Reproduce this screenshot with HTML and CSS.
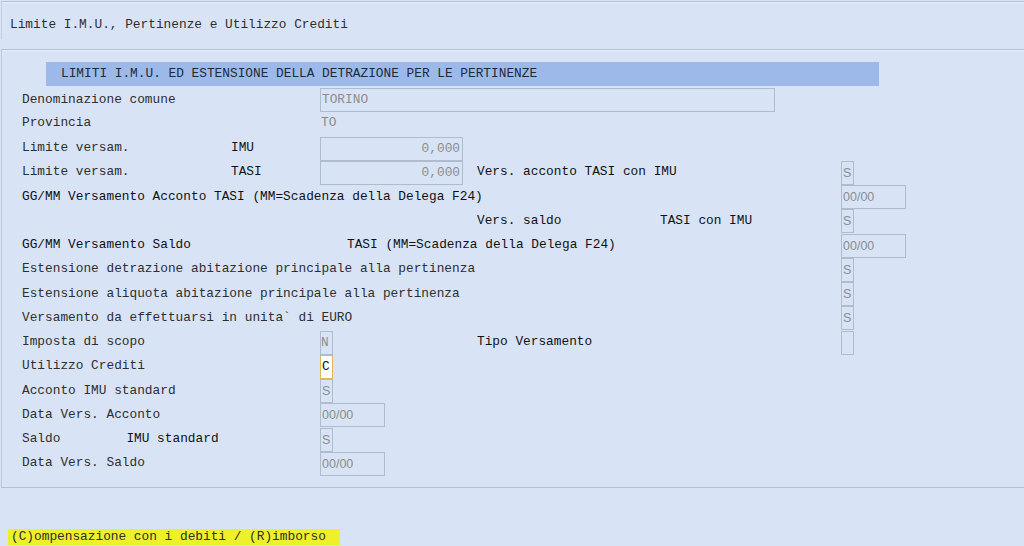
FILE: index.html
```html
<!DOCTYPE html>
<html>
<head>
<meta charset="utf-8">
<link rel="stylesheet" href="styles.css">
</head>
<body>
<div class="titlebox">Limite I.M.U., Pertinenze e Utilizzo Crediti</div>
<div class="panel">
  <div class="header">LIMITI I.M.U. ED ESTENSIONE DELLA DETRAZIONE PER LE PERTINENZE</div>
  <div class="grid">
    <div class="row">
      <span class="c1 span2">Denominazione comune</span>
      <span class="c3 to-end"><span class="box mono wide">TORINO</span></span>
    </div>
    <div class="row">
      <span class="c1 span2">Provincia</span>
      <span class="c3 plain">TO</span>
    </div>
    <div class="row">
      <span class="c1">Limite versam.</span>
      <span class="c2 dark">IMU</span>
      <span class="c3"><span class="box mono num">0,000</span></span>
    </div>
    <div class="row">
      <span class="c1">Limite versam.</span>
      <span class="c2 dark">TASI</span>
      <span class="c3"><span class="box mono num">0,000</span></span>
      <span class="c4 span2 dark">Vers. acconto TASI con IMU</span>
      <span class="c6"><span class="box sans one">S</span></span>
    </div>
    <div class="row">
      <span class="c1 span5 dark">GG/MM Versamento Acconto TASI (MM=Scadenza della Delega F24)</span>
      <span class="c6"><span class="box sans date">00/00</span></span>
    </div>
    <div class="row">
      <span class="c4 dark">Vers. saldo</span>
      <span class="c5 dark">TASI con IMU</span>
      <span class="c6"><span class="box sans one">S</span></span>
    </div>
    <div class="row">
      <span class="c1 span2 dark">GG/MM Versamento Saldo</span>
      <span class="c3 span3 indent dark">TASI (MM=Scadenza della Delega F24)</span>
      <span class="c6"><span class="box sans date">00/00</span></span>
    </div>
    <div class="row">
      <span class="c1 span5">Estensione detrazione abitazione principale alla pertinenza</span>
      <span class="c6"><span class="box sans one">S</span></span>
    </div>
    <div class="row">
      <span class="c1 span5">Estensione aliquota abitazione principale alla pertinenza</span>
      <span class="c6"><span class="box sans one">S</span></span>
    </div>
    <div class="row">
      <span class="c1 span5">Versamento da effettuarsi in unita` di EURO</span>
      <span class="c6"><span class="box sans one">S</span></span>
    </div>
    <div class="row">
      <span class="c1 span2">Imposta di scopo</span>
      <span class="c3"><span class="box mono one">N</span></span>
      <span class="c4 span2 dark">Tipo Versamento</span>
      <span class="c6"><span class="box sans one"></span></span>
    </div>
    <div class="row">
      <span class="c1 span2">Utilizzo Crediti</span>
      <span class="c3"><span class="box mono one focus">C</span></span>
    </div>
    <div class="row">
      <span class="c1 span2">Acconto IMU standard</span>
      <span class="c3"><span class="box sans one">S</span></span>
    </div>
    <div class="row">
      <span class="c1 span2">Data Vers. Acconto</span>
      <span class="c3"><span class="box sans date">00/00</span></span>
    </div>
    <div class="row">
      <span class="c1 span2">Saldo<span class="sub dark">IMU standard</span></span>
      <span class="c3"><span class="box sans one">S</span></span>
    </div>
    <div class="row">
      <span class="c1 span2">Data Vers. Saldo</span>
      <span class="c3"><span class="box sans date">00/00</span></span>
    </div>
  </div>
</div>
<div class="status"><span class="hl">(C)ompensazione con i debiti / (R)imborso</span></div>
</body>
</html>
```

FILE: styles.css
```css
html, body {
  margin: 0;
  padding: 0;
}
body {
  width: 1024px;
  height: 546px;
  overflow: hidden;
  background: #d8e4f6;
  font-family: "Liberation Mono", "Courier New", monospace;
  font-size: 12.8px;
  color: #2e2e2e;
}
.dark {
  color: #111111;
}
.titlebox {
  margin-top: 1px;
  margin-left: 1px;
  height: 22px;
  border-top: 1px solid #b2c1d6;
  border-left: 1px solid #c3d0e2;
  box-shadow: inset 0 1px 0 #e4ecf8;
  padding: 15px 0 0 8px;
  line-height: 16px;
}
.panel {
  margin-top: 10px;
  margin-left: 1px;
  border-top: 1px solid #b2c1d6;
  border-left: 1px solid #b9c7db;
  border-bottom: 1px solid #b2c1d6;
  box-shadow: inset 0 1px 0 #e4ecf8;
  padding: 12px 0 13px 0;
}
.header {
  margin-left: 44px;
  width: 818px;
  height: 24px;
  line-height: 24px;
  padding-left: 15px;
  background: #9db9ea;
  color: #1e2a3c;
}
.grid {
  padding-left: 20px;
}
.row {
  display: grid;
  grid-template-columns: 209px 89px 157px 183px 181px 120px;
  height: 24.27px;
  align-items: center;
}
.row > span {
  white-space: pre;
}
.c1 { grid-column: 1; }
.c2 { grid-column: 2; }
.c3 { grid-column: 3; }
.c4 { grid-column: 4; }
.c5 { grid-column: 5; }
.c6 { grid-column: 6; }
.span2 { grid-column-end: span 2; }
.span3 { grid-column-end: span 3; }
.span5 { grid-column-end: span 5; }
.to-end { grid-column-end: span 3; }
.indent { padding-left: 27px; }
.sub { padding-left: 66px; }
.plain {
  color: #8a8a8a;
  padding-left: 1px;
}
.c3, .c6 {
  display: flex;
  align-items: center;
}
.box {
  box-sizing: border-box;
  display: block;
  height: 24px;
  line-height: 22px;
  border: 1px solid #adbccf;
  color: #8c8c8c;
  margin-top: 2px;
}
.mono {
  font-family: "Liberation Mono", "Courier New", monospace;
  font-size: 12.8px;
}
.sans {
  font-family: "Liberation Sans", Arial, sans-serif;
  font-size: 12.5px;
  padding-left: 1px;
}
.wide {
  width: 455px;
  padding-left: 1px;
}
.num {
  width: 143px;
  text-align: right;
  padding-right: 2px;
}
.one {
  width: 13px;
}
.date {
  width: 65px;
}
.focus {
  background: #ffffff;
  border-color: #e2b556;
  color: #111111;
  padding-left: 1px;
}
.status {
  margin-top: 41px;
  padding-left: 8px;
}
.hl {
  display: inline-block;
  background: #eef02a;
  padding: 0 14px 0 3px;
  height: 16px;
  line-height: 16px;
}
```
